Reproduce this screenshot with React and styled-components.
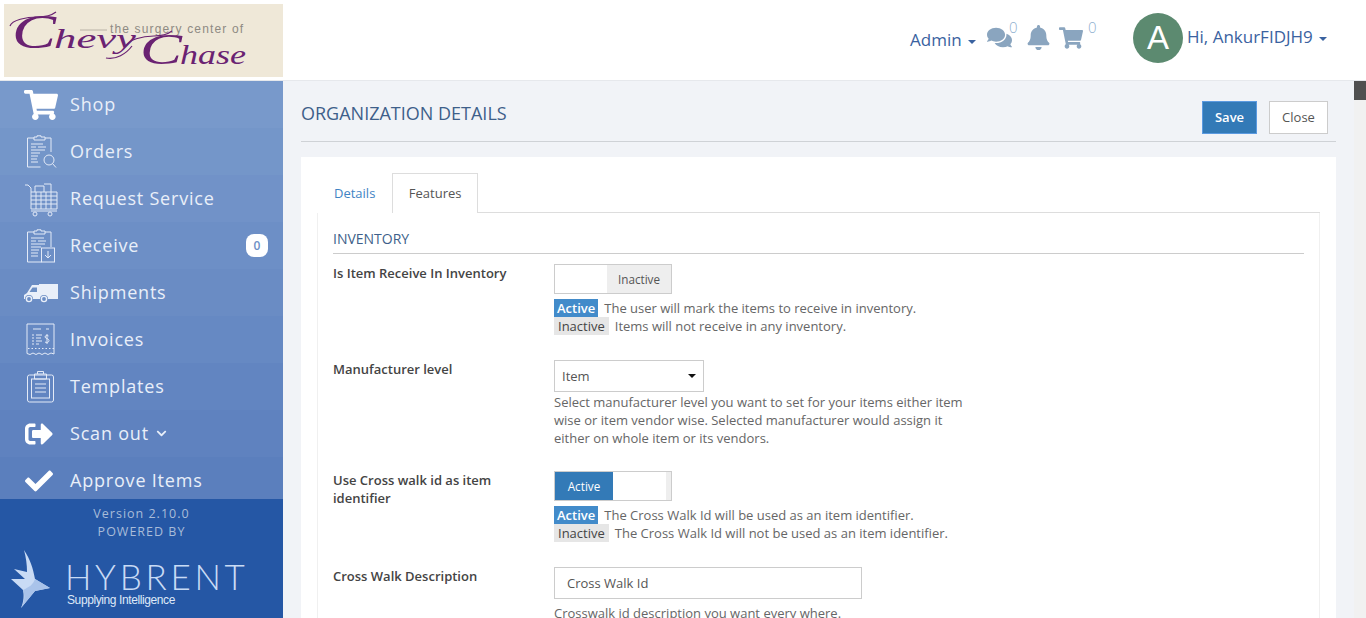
import React from 'react';
import styled, { createGlobalStyle } from 'styled-components';
import { FaBell, FaCheck, FaChevronDown, FaComments, FaShoppingCart, FaSignOutAlt } from 'react-icons/fa';

const GlobalStyle = createGlobalStyle`
  html, body { margin: 0; padding: 0; height: 100%; overflow: hidden; }
  * { box-sizing: border-box; }
  body { font-family: "Open Sans", "Liberation Sans", sans-serif; font-size: 13px; color: #555; background: #fff; }
`;

const Page = styled.div`
  width: 1366px;
  height: 618px;
  display: flex;
  flex-direction: column;
  overflow: hidden;
`;

const Header = styled.header`
  height: 81px;
  flex: none;
  display: flex;
  align-items: flex-start;
  background: #fff;
  border-bottom: 1px solid #e6e8ec;
  padding: 4px 0 0 4px;
`;

const LogoBox = styled.div`
  width: 279px;
  height: 73px;
  background: #efe8d8;
`;

const HeaderRight = styled.div`
  margin-left: 627px;
  display: flex;
  align-items: flex-start;
  color: #3a62a0;
  font-size: 17px;
`;

const AdminLink = styled.span`
  margin-top: 24px;
  width: 77px;
  flex: none;
  line-height: 24px;
  white-space: nowrap;
`;

const Caret = styled.i`
  display: inline-block;
  width: 0;
  height: 0;
  margin-left: 6px;
  vertical-align: 2px;
  border-top: 4px solid #3a62a0;
  border-left: 4px solid transparent;
  border-right: 4px solid transparent;
`;

const IconSlot = styled.span`
  display: flex;
  flex: none;
  width: ${(p) => p.$w}px;
  margin-top: ${(p) => p.$top}px;
  color: #8aa5bf;
  font-size: ${(p) => p.$size}px;

  svg {
    flex: none;
  }
`;

const Count = styled.sup`
  flex: none;
  width: ${(p) => p.$w}px;
  margin-top: 14px;
  color: #8fb0cf;
  font-size: 15px;
  line-height: 18px;
  vertical-align: baseline;
  font-weight: 300;
`;

const Avatar = styled.div`
  width: 50px;
  height: 50px;
  flex: none;
  margin-top: 9px;
  border-radius: 50%;
  background: #5c8a70;
  color: #fff;
  font-family: "Liberation Sans", sans-serif;
  font-size: 33px;
  line-height: 50px;
  text-align: center;
`;

const UserName = styled.span`
  margin: 21px 0 0 4px;
  white-space: nowrap;
  line-height: 24px;
`;

const Body = styled.div`
  flex: 1;
  display: flex;
  min-height: 0;
`;

const Sidebar = styled.aside`
  width: 283px;
  flex: none;
  display: flex;
  flex-direction: column;
  background: #2557a5;
`;

const Nav = styled.nav`
  height: 418px;
  flex: none;
  overflow: hidden;
`;

const NavRow = styled.div`
  height: 47px;
  display: flex;
  align-items: center;
  padding: 0 15px 0 24px;
  background: ${(p) => `rgb(${120 - p.$i * 3.6}, ${153 - p.$i * 3.3}, ${203 - p.$i * 1.7})`};
  color: #e9eff9;
  font-size: 18px;
  letter-spacing: 0.8px;
`;

const NavIcon = styled.span`
  width: 46px;
  flex: none;
  display: flex;
  padding-left: ${(p) => p.$pad || 0}px;
  color: #fff;
`;

const NavLabel = styled.span`
  margin-top: -2px;
`;

const NavBadge = styled.span`
  margin-left: auto;
  width: 22px;
  height: 23px;
  border-radius: 8px;
  background: #fff;
  color: #6d90c6;
  font-size: 12px;
  font-weight: 600;
  letter-spacing: 0;
  line-height: 23px;
  text-align: center;
`;

const ScanCaret = styled(FaChevronDown)`
  margin-left: 7px;
  font-size: 11px;
`;

const SideFooter = styled.div`
  flex: 1;
  padding-top: 6px;
  color: #a8bcd9;
  font-size: 12.5px;
  letter-spacing: 1px;
  line-height: 18px;
  text-align: center;
`;

const BrandMark = styled.div`
  display: flex;
  margin: 9px 0 0 11px;
  color: #c9dbf5;
  text-align: left;
  letter-spacing: 0;
`;

const BrandWords = styled.div`
  margin: 8px 0 0 16px;
`;

const BrandName = styled.div`
  margin-left: -2px;
  font-family: "Lato", "Open Sans", sans-serif;
  font-weight: 300;
  font-size: 35px;
  line-height: 36px;
  letter-spacing: 3.7px;
`;

const BrandTag = styled.div`
  font-family: "Liberation Sans", sans-serif;
  font-size: 12px;
  line-height: 13px;
  color: #dfe9f8;
  letter-spacing: -0.4px;
`;

const Main = styled.main`
  flex: 1;
  min-width: 0;
  background: #f1f3f7;
  padding: 0 18px;
`;

const TitleBar = styled.div`
  height: 61px;
  display: flex;
  align-items: flex-start;
  padding: 20px 8px 0 0;
  border-bottom: 1px solid #cfd2d6;
`;

const Title = styled.h1`
  margin: 0 auto 0 0;
  font-size: 18px;
  line-height: 25px;
  font-weight: 400;
  color: #3e5f8a;
`;

const Button = styled.button`
  height: 33px;
  margin-left: 12px;
  padding: 0 0 2px;
  width: ${(p) => p.$w}px;
  font: inherit;
  font-size: 13px;
  font-weight: ${(p) => (p.$primary ? 600 : 400)};
  color: ${(p) => (p.$primary ? '#fff' : '#555')};
  background: ${(p) => (p.$primary ? '#337ab7' : '#fff')};
  border: 1px solid ${(p) => (p.$primary ? '#5b9ae0' : '#ccc')};
`;

const Card = styled.section`
  margin-top: 15px;
  background: #fff;
  height: 470px;
  padding: 16px 16px 0;
  overflow: hidden;
`;

const Tabs = styled.div`
  display: flex;
  height: 40px;
  border-bottom: 1px solid #ddd;
`;

const Tab = styled.div`
  height: 40px;
  padding: 0 ${(p) => p.$pad}px;
  font-size: 13px;
  line-height: 39px;
  color: ${(p) => (p.$active ? '#555' : '#3f84c4')};
  background: #fff;
  border: 1px solid ${(p) => (p.$active ? '#ddd' : 'transparent')};
  border-bottom: 0;
`;

const TabPane = styled.div`
  border-left: 1px solid #f0f0f0;
  border-right: 1px solid #f0f0f0;
  padding: 0 15px;
  height: 420px;
`;

const Section = styled.h2`
  margin: 0 0 10px;
  height: 41px;
  padding-top: 17px;
  font-size: 14px;
  line-height: 18px;
  font-weight: 400;
  color: #3e5f8a;
  border-bottom: 1px solid #ccc;
`;

const Row = styled.div`
  display: grid;
  grid-template-columns: 221px 1fr;
  margin-bottom: ${(p) => p.$gap}px;
`;

const Label = styled.label`
  padding-right: 40px;
  font-size: 13px;
  font-weight: 600;
  line-height: 18px;
  color: #444;
`;

const Toggle = styled.div`
  width: 118px;
  height: 30px;
  display: flex;
  border: 1px solid #ccc;
  font-size: 11.7px;
  line-height: 28px;
  text-align: center;
  margin-bottom: 5px;
`;

const TogglePart = styled.span`
  flex: ${(p) => (p.$w ? `0 0 ${p.$w}px` : 1)};
  background: ${(p) => p.$bg};
  color: ${(p) => p.$color || '#555'};
`;

const Help = styled.p`
  margin: 0;
  width: ${(p) => p.$w || 640}px;
  font-size: 13px;
  line-height: 18px;
  color: #666;
`;

const Tag = styled.span`
  display: inline-block;
  margin-right: 6px;
  padding: 0 ${(p) => (p.$on ? 3 : 4)}px;
  font-weight: ${(p) => (p.$on ? 600 : 400)};
  color: ${(p) => (p.$on ? '#fff' : '#444')};
  background: ${(p) => (p.$on ? '#428bca' : '#e6e6e6')};
`;

const SelectBox = styled.div`
  width: 150px;
  height: 32px;
  display: flex;
  align-items: center;
  justify-content: space-between;
  padding: 0 7px 0 7px;
  border: 1px solid #ccc;
  font-size: 13px;
  color: #555;
  margin-bottom: 1px;
`;

const SelectCaret = styled.i`
  width: 0;
  height: 0;
  border-top: 4px solid #111;
  border-left: 4px solid transparent;
  border-right: 4px solid transparent;
`;

const TextInput = styled.div`
  width: 308px;
  height: 32px;
  padding: 0 12px;
  border: 1px solid #ccc;
  font-size: 13px;
  line-height: 30px;
  color: #555;
  margin-bottom: 5px;
`;

const Scrollbar = styled.div`
  width: 12px;
  flex: none;
  background: #f1f1f1;
`;

const ScrollThumb = styled.div`
  height: 19px;
  background: #505050;
`;

const Line = (props) => <svg fill="none" stroke="#e3eaf7" strokeWidth="1" {...props} />;

const OrdersIcon = () => (
  <Line width="32" height="34" viewBox="0 0 32 34">
    <path d="M9 3H2.5v29h13M20 3h6v14" />
    <path d="M9 4V2h3V.8h4V2h4v3H9z" />
    <path d="M6 9h12M6 12h5M13 12h8M6 15h14M6 18h9M6 21h7M6 24h6M6 27h7" />
    <circle cx="24" cy="25" r="5" />
    <path d="M27.5 28.5l3.5 4" />
  </Line>
);

const ServiceIcon = () => (
  <Line width="34" height="36" viewBox="0 0 34 36">
    <path d="M1 4h3l3 3v21h26V11H7" />
    <path d="M7 15h26M7 19h26M7 23h26M12 11v17M17 11v17M22 11v17M27 11v17" />
    <path d="M11 11V5h9v6M20 3h7v8" />
    <circle cx="11" cy="33" r="2" />
    <circle cx="26" cy="33" r="2" />
    <path d="M7 30h26" />
  </Line>
);

const ReceiveIcon = () => (
  <Line width="32" height="34" viewBox="0 0 32 34">
    <path d="M9 3H2.5v30h14M20 3h6v15" />
    <path d="M9 4V2h3V.8h4V2h4v3H9z" />
    <path d="M6 9h13M6 12h5M13 12h8M6 15h14M6 18h10M6 21h8M6 24h7M6 27h7" />
    <rect x="16.5" y="19" width="13" height="14" />
    <path d="M23 22v7M20 26l3 3 3-3" />
  </Line>
);

const VanIcon = () => (
  <svg width="34" height="20" viewBox="0 0 34 20" fill="#e9eff9">
    <path d="M15 1h19v15H24a4 4 0 0 0-8 0H9a4 4 0 0 0-8 0H0v-4l3-2 5-8h7z" />
    <path d="M8.500 4.500h4.500V9H5.500z" fill="#6d8fc4" />
    <circle cx="5" cy="16" r="2.6" fill="none" stroke="#e9eff9" strokeWidth="1.4" />
    <circle cx="20" cy="16" r="2.6" fill="none" stroke="#e9eff9" strokeWidth="1.4" />
  </svg>
);

const InvoiceIcon = () => (
  <Line width="29" height="34" viewBox="0 0 29 34">
    <path d="M1 1h27v30l-3-1-3 1.500-3-1.500-3 1.500-3-1.500-3 1.500-3-1.500-3 1.500-3-1z" />
    <path d="M7 6h8M20 6h3M6 12h2M10 12h6M6 15h2M10 15h5M6 18h2M10 18h6M6 21h2M10 21h3" />
    <path d="M2 25.500h26" strokeDasharray="1.500 2" />
    <path d="M22.500 13c-1.500-1-3.500-.5-3.500 1s4 1.500 4 3.500-2.500 2.500-4 1.500M21 11v10" />
  </Line>
);

const TemplatesIcon = () => (
  <Line width="27" height="33" viewBox="0 0 27 33">
    <rect x="0.500" y="5" width="26" height="27" rx="2" />
    <rect x="4.500" y="9" width="18" height="19" />
    <path d="M7.500 4h12v5h-12zM10.500 4V1.500h6V4M8 14h11M8 18h11M8 22h11" />
  </Line>
);

const HybrentWing = () => (
  <svg width="40" height="58" viewBox="0 0 40 58" fill="currentColor">
    <path d="M13 0c6 9 9 18 11 29l15 9-15 3-14 17c3-7 3-13 2-18L0 29l14 0L3 19l13 3C16 15 15 7 13 0z" />
    <path d="M24 29c-2 6-6 8-12 11 2 5 2 11-2 18l14-17 15-3z" fill="#a9c3ea" />
  </svg>
);

const ChevyChaseLogo = () => (
  <svg width="279" height="73" viewBox="0 0 279 73">
    <path d="M76 26h27" stroke="#b9b2a6" strokeWidth="1" />
    <text x="106" y="29" fontFamily="Liberation Sans, sans-serif" fontSize="12" letterSpacing="1.150" fill="#8e8a83">the surgery center of</text>
    <g fontFamily="Liberation Serif, serif" fontStyle="italic" fill="#6a2272">
      <text x="8" y="44" fontSize="48" textLength="44" lengthAdjust="spacingAndGlyphs">C</text>
      <text x="50" y="44" fontSize="28" textLength="82" lengthAdjust="spacingAndGlyphs">hevy</text>
      <text x="136" y="60" fontSize="44" textLength="42" lengthAdjust="spacingAndGlyphs">C</text>
      <text x="176" y="60" fontSize="28" textLength="66" lengthAdjust="spacingAndGlyphs">hase</text>
    </g>
    <path d="M6 22c2-6 16-9 28-9 8 0 14-2 18-5M122 42c2-6 16-10 28-10 8 0 14-2 18-5" fill="none" stroke="#6a2272" strokeWidth="1.200" />
    <path d="M128 42c-6 8-16 14-26 12" fill="none" stroke="#6a2272" strokeWidth="1.200" />
  </svg>
);

const navItems = [
  { label: 'Shop', icon: <FaShoppingCart size={34} /> },
  { label: 'Orders', icon: <OrdersIcon />, pad: 1 },
  { label: 'Request Service', icon: <ServiceIcon /> },
  { label: 'Receive', icon: <ReceiveIcon />, pad: 1, badge: '0' },
  { label: 'Shipments', icon: <VanIcon /> },
  { label: 'Invoices', icon: <InvoiceIcon />, pad: 2 },
  { label: 'Templates', icon: <TemplatesIcon />, pad: 3 },
  { label: 'Scan out', icon: <FaSignOutAlt size={28} />, pad: 1, caret: true },
  { label: 'Approve Items', icon: <FaCheck size={28} />, pad: 1 },
];

const App = () => (
  <Page>
    <GlobalStyle />
    <Header>
      <LogoBox>
        <ChevyChaseLogo />
      </LogoBox>
      <HeaderRight>
        <AdminLink>Admin<Caret /></AdminLink>
        <IconSlot $w={22} $top={21} $size={25}><FaComments /></IconSlot>
        <Count $w={17}>0</Count>
        <IconSlot $w={33} $top={21} $size={25}><FaBell /></IconSlot>
        <IconSlot $w={29} $top={22} $size={24}><FaShoppingCart /></IconSlot>
        <Count $w={45}>0</Count>
        <Avatar>A</Avatar>
        <UserName>Hi, AnkurFIDJH9<Caret /></UserName>
      </HeaderRight>
    </Header>
    <Body>
      <Sidebar>
        <Nav>
          {navItems.map((item, i) => (
            <NavRow key={item.label} $i={i}>
              <NavIcon $pad={item.pad}>{item.icon}</NavIcon>
              <NavLabel>{item.label}</NavLabel>
              {item.caret && <ScanCaret />}
              {item.badge && <NavBadge>{item.badge}</NavBadge>}
            </NavRow>
          ))}
        </Nav>
        <SideFooter>
          <div>Version 2.10.0</div>
          <div>POWERED BY</div>
          <BrandMark>
            <HybrentWing />
            <BrandWords>
              <BrandName>HYBRENT</BrandName>
              <BrandTag>Supplying Intelligence</BrandTag>
            </BrandWords>
          </BrandMark>
        </SideFooter>
      </Sidebar>
      <Main>
        <TitleBar>
          <Title>ORGANIZATION DETAILS</Title>
          <Button $primary $w={55}>Save</Button>
          <Button $w={59}>Close</Button>
        </TitleBar>
        <Card>
          <Tabs>
            <Tab $pad={16}>Details</Tab>
            <Tab $pad={15.5} $active>Features</Tab>
          </Tabs>
          <TabPane>
            <Section>INVENTORY</Section>
            <Row $gap={25}>
              <Label>Is Item Receive In Inventory</Label>
              <div>
                <Toggle>
                  <TogglePart $w={52} $bg="#fff" />
                  <TogglePart $bg="#eee">Inactive</TogglePart>
                </Toggle>
                <Help><Tag $on>Active</Tag>The user will mark the items to receive in inventory.</Help>
                <Help><Tag>Inactive</Tag>Items will not receive in any inventory.</Help>
              </div>
            </Row>
            <Row $gap={24}>
              <Label>Manufacturer level</Label>
              <div>
                <SelectBox>Item<SelectCaret /></SelectBox>
                <Help $w={420}>Select manufacturer level you want to set for your items either item wise or item vendor wise. Selected manufacturer would assign it either on whole item or its vendors.</Help>
              </div>
            </Row>
            <Row $gap={25}>
              <Label>Use Cross walk id as item identifier</Label>
              <div>
                <Toggle>
                  <TogglePart $w={58} $bg="#337ab7" $color="#fff">Active</TogglePart>
                  <TogglePart $w={53} $bg="#fff" />
                  <TogglePart $bg="#eee" />
                </Toggle>
                <Help><Tag $on>Active</Tag>The Cross Walk Id will be used as an item identifier.</Help>
                <Help><Tag>Inactive</Tag>The Cross Walk Id will not be used as an item identifier.</Help>
              </div>
            </Row>
            <Row $gap={0}>
              <Label>Cross Walk Description</Label>
              <div>
                <TextInput>Cross Walk Id</TextInput>
                <Help>Crosswalk id description you want every where.</Help>
              </div>
            </Row>
          </TabPane>
        </Card>
      </Main>
      <Scrollbar>
        <ScrollThumb />
      </Scrollbar>
    </Body>
  </Page>
);

export default App;
